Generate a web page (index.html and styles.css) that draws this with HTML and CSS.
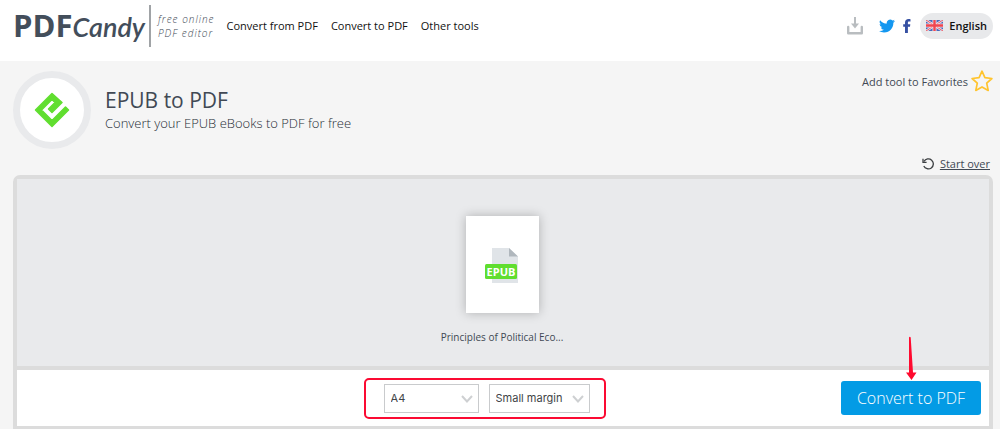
FILE: index.html
```html
<!DOCTYPE html>
<html lang="en">
<head>
  <meta charset="UTF-8" />
  <meta name="viewport" content="width=device-width, initial-scale=1.0" />
  <title>EPUB to PDF - PDF Candy</title>
  <link rel="stylesheet" href="styles.css">
</head>
<body>
  <header class="header">
    <a href="/" class="logo"><span class="logo-pdf">PDF</span><span class="logo-candy">Candy</span></a>
    <p class="slogan">free online<br>PDF editor</p>
    <nav class="nav">
      <a href="#">Convert from PDF</a>
      <a href="#">Convert to PDF</a>
      <a href="#">Other tools</a>
    </nav>
    <div class="header-right">
      <a href="#" class="icon-link" aria-label="Desktop version">
        <svg width="16" height="19" viewBox="0 0 16 19" fill="none" stroke="#b9bdc0">
          <path d="M1.2 11v6.3h13.6V11" stroke-width="2.4" stroke-linejoin="round" stroke-linecap="round"/>
          <path d="M8 1v9" stroke-width="2"/>
          <path d="M4 7.5h8L8 12.5z" fill="#b9bdc0" stroke="none"/>
        </svg>
      </a>
      <a href="#" class="icon-link twitter" aria-label="Twitter">
        <svg width="16" height="16" viewBox="0 0 24 24" fill="#1397f0">
          <path d="M24 4.6a10 10 0 0 1-2.8.8 5 5 0 0 0 2.1-2.7 10 10 0 0 1-3.1 1.2 4.9 4.9 0 0 0-8.4 4.5A14 14 0 0 1 1.7 3.2a4.9 4.9 0 0 0 1.5 6.5 5 5 0 0 1-2.2-.6v.1a4.9 4.9 0 0 0 3.9 4.8 5 5 0 0 1-2.2.1 4.9 4.9 0 0 0 4.6 3.4A9.9 9.9 0 0 1 0 19.5a14 14 0 0 0 7.5 2.2c9.1 0 14-7.5 14-14v-.6A10 10 0 0 0 24 4.6z"/>
        </svg>
      </a>
      <a href="#" class="icon-link facebook" aria-label="Facebook">
        <svg width="8" height="14" viewBox="0 0 8 14" fill="#3650a2">
          <path d="M2 14V7.700H.2V5.200h1.800V3.500C2 1.300 3.400.1 5.500.1c.9 0 1.700.1 2 .1v2.300H6.200c-1.100 0-1.300.5-1.300 1.300v1.400h2.400L7 7.700H4.900V14z"/>
        </svg>
      </a>
      <button class="lang" type="button">
        <svg width="17" height="11" viewBox="0 0 17 11">
          <rect width="17" height="11" fill="#4a68b8"/>
          <path d="M0 0l17 11M17 0L0 11" stroke="#e4e4f0" stroke-width="2.4"/>
          <path d="M0 0l17 11M17 0L0 11" stroke="#ef5a62" stroke-width="1"/>
          <path d="M8.5 0v11M0 5.500h17" stroke="#f3dfe6" stroke-width="4"/>
          <path d="M8.5 0v11M0 5.500h17" stroke="#f0454f" stroke-width="2.4"/>
        </svg>
        English
      </button>
    </div>
  </header>

  <main class="container">
    <div class="title-row">
      <div class="tool-icon">
        <svg width="36" height="36" viewBox="0 0 36 36">
          <path d="M18 1.500L1.500 18 18 34.500 34.500 18l-3-3L18 28.500 7.500 18 18 7.500l3 3L14.500 17l3.500 3.500L28 10.500z" fill="#60de2f" stroke="#60de2f" stroke-width="1.5" stroke-linejoin="round"/>
        </svg>
      </div>
      <div class="title">
        <h1>EPUB to PDF</h1>
        <p>Convert your EPUB eBooks to PDF for free</p>
      </div>
      <div class="title-links">
        <a href="#" class="favorite">
          Add tool to Favorites
          <svg width="22" height="22" viewBox="0 0 22 22" fill="none" stroke="#ffc42e" stroke-width="1.7" stroke-linejoin="round">
            <path d="M11 1.200l2.900 6.500 7 .8-5.200 4.700 1.500 7.200-6.200-3.500-6.200 3.500 1.500-7.200L1.100 8.500l7-.8z"/>
          </svg>
        </a>
        <a href="#" class="start-over">
          <svg width="13" height="12" viewBox="0 0 13 12" fill="none" stroke="#3c3f42" stroke-width="1.3">
            <path d="M2 3.400A5 5 0 1 1 1.800 8"/>
            <path d="M1 .8v3.500h3.600"/>
          </svg>
          <span>Start over</span>
        </a>
      </div>
    </div>

    <form class="panel">
      <div class="files">
        <div class="file-card">
          <svg width="34" height="36" viewBox="0 0 34 36">
            <path d="M7 1h17l9 8.500V36H7z" fill="#e0e4e8"/>
            <path d="M24 1l9 8.500h-9z" fill="#b0b7bd"/>
            <rect x="0" y="17" width="32" height="15" rx="1.5" fill="#60de2f"/>
            <text x="16" y="28.5" class="file-type">EPUB</text>
          </svg>
        </div>
        <p class="file-name">Principles of Political Eco...</p>
      </div>
      <div class="actions">
        <div class="options">
          <div class="select page-size">
            <select aria-label="Page size">
              <option>A4</option>
              <option>A5</option>
              <option>Letter</option>
            </select>
            <svg width="12" height="8" viewBox="0 0 12 8" fill="none" stroke="#ced0d2" stroke-width="2"><path d="M1 1l5 5.500L11 1"/></svg>
          </div>
          <div class="select margin-size">
            <select aria-label="Margin">
              <option>Small margin</option>
              <option>No margin</option>
              <option>Big margin</option>
            </select>
            <svg width="12" height="8" viewBox="0 0 12 8" fill="none" stroke="#ced0d2" stroke-width="2"><path d="M1 1l5 5.500L11 1"/></svg>
          </div>
        </div>
        <div class="submit">
          <svg class="arrow" width="12" height="46" viewBox="0 0 12 46" fill="#ff0a2f">
            <path d="M4 2.500q.8-1.500 1.700 0L8 37.500h3.500L6.500 45 1 37.500h3z"/>
          </svg>
          <button class="btn" type="submit">Convert to PDF</button>
        </div>
      </div>
    </form>
  </main>
</body>
</html>
```

FILE: styles.css
```css
* {
  margin: 0;
  padding: 0;
  box-sizing: border-box;
}

body {
  background: #f5f5f5;
  color: #414954;
  font-family: "Open Sans", "Noto Sans", sans-serif;
  font-size: 11px;
}

a {
  color: inherit;
  text-decoration: none;
}

svg {
  display: block;
  flex-shrink: 0;
}

/* header */
.header {
  display: flex;
  align-items: center;
  height: 61px;
  padding: 0 7px 10px 13px;
  background: #fff;
}

.logo {
  display: flex;
  align-items: baseline;
  width: 136px;
  color: #434e5b;
  line-height: 42px;
  white-space: nowrap;
}

.logo-pdf {
  font-size: 31px;
  font-weight: 700;
}

.logo-candy {
  font-family: "Brush Script MT", "Lato", cursive;
  font-size: 27px;
  font-style: italic;
  font-weight: 600;
}

.slogan {
  height: 42px;
  padding: 7px 0 0 7px;
  border-left: 2px solid #a0a3a6;
  font-size: 10px;
  font-style: italic;
  font-weight: 300;
  line-height: 14px;
  letter-spacing: 1px;
  white-space: nowrap;
}

.nav {
  display: flex;
  gap: 13px;
  margin-left: 12px;
  color: #111;
  font-weight: 500;
  white-space: nowrap;
}

.header-right {
  display: flex;
  align-items: center;
  margin-left: auto;
}

.twitter {
  margin-left: 16px;
}

.facebook {
  margin-left: 8px;
}

.lang {
  display: flex;
  align-items: center;
  gap: 6px;
  height: 26px;
  margin-left: 9px;
  padding: 0 6px;
  border: 0;
  border-radius: 13px;
  background: #e8e9eb;
  color: #111;
  font-family: inherit;
  font-size: 11px;
  font-weight: 600;
  cursor: pointer;
}

/* title */
.container {
  padding: 10px 7px 0 13px;
}

.title-row {
  display: flex;
  height: 104px;
}

.tool-icon {
  display: flex;
  align-items: center;
  justify-content: center;
  width: 78px;
  height: 78px;
  border: 7px solid #e9eaec;
  border-radius: 50%;
  background: #fff;
}

.title {
  padding: 14px 0 0 14px;
}

.title h1 {
  font-size: 21px;
  font-weight: 400;
  line-height: 30px;
}

.title p {
  color: #262d36;
  font-size: 13px;
  font-weight: 300;
  line-height: 16px;
}

.title-links {
  display: flex;
  flex-direction: column;
  align-items: flex-end;
  justify-content: space-between;
  margin-left: auto;
  padding-bottom: 4px;
}

.favorite {
  display: flex;
  align-items: center;
  gap: 3px;
  height: 20px;
}

.start-over {
  display: flex;
  align-items: center;
  gap: 5px;
  padding-right: 3px;
}

.start-over span {
  text-decoration: underline;
}

/* panel */
.panel {
  border: 4px solid #dcdcdc;
  border-bottom-width: 3px;
  border-radius: 7px 7px 0 0;
  background: #fff;
}

.files {
  display: flex;
  flex-direction: column;
  align-items: center;
  height: 191px;
  padding: 37px 2px 0 0;
  border-bottom: 4px solid #dcdcdc;
  background: #e9eaec;
}

.file-card {
  display: flex;
  align-items: center;
  justify-content: center;
  width: 73px;
  height: 97px;
  background: #fff;
  box-shadow: 0 0 10px rgba(0, 0, 0, 0.25);
}

.file-type {
  fill: #fff;
  font-size: 11px;
  font-weight: 700;
  text-anchor: middle;
}

.file-name {
  margin-top: 16px;
  font-size: 10px;
  line-height: 16px;
}

.actions {
  display: grid;
  grid-template-columns: 12fr auto 13fr;
  align-items: center;
  height: 56px;
  padding-right: 8px;
}

.options {
  display: flex;
  grid-column: 2;
  gap: 10px;
  padding: 4px 14px 4px 18px;
  border: 2px solid #fb0a32;
  border-radius: 5px;
}

.select {
  position: relative;
}

.page-size {
  width: 95px;
}

.margin-size {
  width: 101px;
}

.select select {
  display: block;
  width: 100%;
  height: 29px;
  padding-left: 6px;
  border: 1px solid #c9cbcd;
  background: #fff;
  appearance: none;
  color: #414447;
  font-family: Inter, "Liberation Sans", sans-serif;
  font-size: 11px;
}

.select svg {
  position: absolute;
  top: 11px;
  right: 6px;
  pointer-events: none;
}

.submit {
  position: relative;
  justify-self: end;
}

.btn {
  display: block;
  width: 140px;
  height: 34px;
  border: 0;
  border-radius: 3px;
  background: #039be5;
  color: #fff;
  font-family: inherit;
  font-size: 16px;
  font-weight: 300;
  cursor: pointer;
}

.arrow {
  position: absolute;
  right: 46%;
  bottom: 34px;
}
```
